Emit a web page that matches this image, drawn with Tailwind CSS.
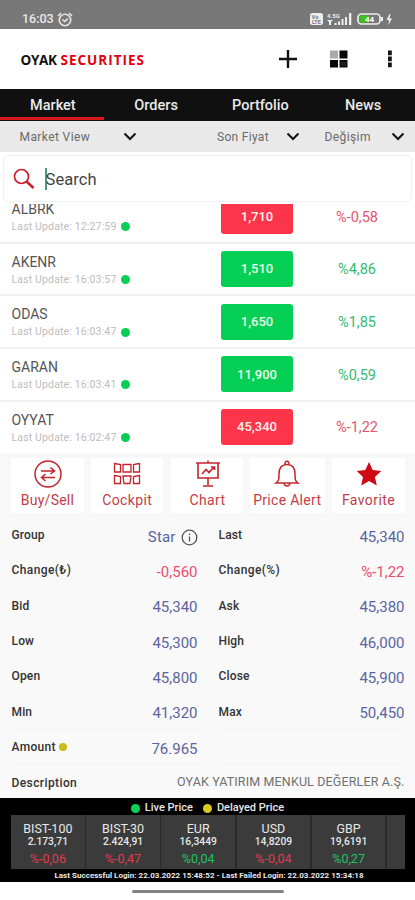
<!DOCTYPE html>
<html lang="en">
<head>
<meta charset="utf-8">
<title>OYAK Securities</title>
<script src="https://cdn.jsdelivr.net/npm/@tailwindcss/browser@4"></script>
</head>
<body class="w-[415px] h-[900px] overflow-hidden bg-white font-['Roboto','Liberation_Sans',sans-serif] flex flex-col whitespace-nowrap">

<!-- Status bar -->
<div class="h-[29px] shrink-0 bg-[#787878] flex items-center pl-[22px] pr-[23px] pt-[9px] text-[#e8e8e8]">
  <span class="text-[12.500px] leading-4 font-medium">16:03</span>
  <svg class="ml-[3px]" width="16" height="15" viewBox="0 0 16 15" fill="none" stroke="#e8e8e8" stroke-width="1.6"><circle cx="8" cy="8" r="5.7"/><path d="M5.5 7.5l2.3 2 3-2.8M1 4l3-2.8M15 4l-3-2.8"/></svg>
  <svg class="ml-auto" width="83" height="15" viewBox="0 0 83 15">
    <rect x="1" y="1" width="13" height="12" rx="2.500" fill="#eee"/>
    <text x="2.500" y="6.700" font-size="6" font-weight="700" fill="#787878">Vo</text><text x="3" y="12" font-size="5.500" font-weight="700" fill="#787878">LTE</text>
    <text x="18" y="5.600" font-size="6" font-weight="700" fill="#eee">4.5G</text>
    <path d="M18 8h6l-2 2v3h-2v-3zM25.500 13v-2h2v2zM29 13V9.500h2V13zM32.500 13V7h2v6zM36 13V5h2v8zM40 13V1h2.300v12z" fill="#eee"/>
    <rect x="49" y="2" width="22" height="10" rx="3.500" fill="#787878" stroke="#eee" stroke-width="1.700"/><path d="M72 5h2v4h-2z" fill="#eee"/>
    <rect x="51" y="3.500" width="9" height="7" rx="1.500" fill="#3cc21c"/><text x="56" y="10" font-size="8" font-weight="700" fill="#fff">44</text>
    <path d="M80.500 2l-3 6h2.500l-.5 5 3.500-6.500h-2.500l1-4.500z" fill="#eee"/>
  </svg>
</div>

<!-- App header -->
<header class="h-[60px] shrink-0 flex items-center pl-[20.500px] pr-[20px]">
  <h1 class="flex font-['Open_Sans','Noto_Sans',sans-serif] font-bold text-[13.500px] leading-4 pt-px"><span class="w-[40px] text-[#111] tracking-[-0.300px]">OYAK</span><span class="text-[#e3000f] tracking-[1px]">SECURITIES</span></h1>
  <div class="ml-auto flex items-center">
    <svg width="20" height="20" viewBox="0 0 20 20" stroke="#111" stroke-width="2.400"><path d="M1 10h18M10 1v18"/></svg>
    <svg class="ml-[31px]" width="20" height="20" viewBox="0 0 20 20"><rect x="1" y="1.500" width="8" height="8" fill="#aaa"/><path d="M10.500 1.500h8v8h-8zM1 11h8v7.500H1zM10.500 11h8v7.500h-8z" fill="#080808"/><path d="M11.500 14h6M11.500 16h6" stroke="#444" stroke-width=".7"/></svg>
    <svg class="ml-[36px]" width="10" height="20" viewBox="0 0 10 20" fill="#151515"><path d="M3 1.500h3.800v4.800H3zM3 7.500h3.800v4.800H3zM3 13.500h3.800v4.800H3z"/></svg>
  </div>
</header>

<!-- Tabs -->
<nav class="h-[32px] shrink-0 bg-[#101010] grid grid-cols-4 text-[#eaeaea] text-[14.500px] font-medium text-center leading-[34px]">
  <div class="border-b-[3px] border-[#d9161c] h-[31px] pl-[2px]">Market</div><div class="pl-px">Orders</div><div class="pl-[2px]">Portfolio</div><div>News</div>
</nav>

<!-- Column filters -->
<div class="h-[31px] shrink-0 bg-[#e9e9e9] flex items-center text-[#6a6a6a] text-[12px]">
  <span class="ml-[19.500px] w-[103px] tracking-[0.400px]">Market View</span>
  <svg width="14" height="9" viewBox="0 0 14 9" fill="none" stroke="#111" stroke-width="2"><path d="M1.500 1.500l5.500 5.500 5.500-5.500"/></svg>
  <span class="ml-[80.500px] w-[69px] tracking-[0.300px]">Son Fiyat</span>
  <svg width="14" height="9" viewBox="0 0 14 9" fill="none" stroke="#111" stroke-width="2"><path d="M1.500 1.500l5.500 5.500 5.500-5.500"/></svg>
  <span class="ml-[24.500px] w-[66px] tracking-[0.400px]">Değişim</span>
  <svg width="14" height="9" viewBox="0 0 14 9" fill="none" stroke="#111" stroke-width="2"><path d="M1.500 1.500l5.500 5.500 5.500-5.500"/></svg>
</div>

<!-- Search -->
<div class="h-[52px] shrink-0 px-[3px] pt-[3px] pb-[2px] bg-white relative z-10">
  <div class="h-full rounded-[5px] border border-[#f1f1f1] bg-white flex items-center pl-[9px]">
    <svg width="22" height="22" viewBox="0 0 22 22" fill="none" stroke="#c8202c"><circle cx="8.500" cy="8.500" r="7" stroke-width="1.700"/><path d="M13.500 13.500l7 6.500" stroke-width="2.500"/></svg>
    <span class="ml-[10px] w-[1.500px] h-[22px] bg-[#4a9a83]"></span>
    <span class="text-[16.500px] text-[#444] -ml-px pt-[3px] tracking-[0.100px]">Search</span>
  </div>
</div>

<!-- Quotes -->
<main class="h-[249px] shrink-0 overflow-hidden flex flex-col justify-end">
  <div class="h-[52.700px] shrink-0 border-b-2 border-[#f0f0f0] flex items-center">
    <div class="w-[221px] shrink-0 pl-[11.500px] pt-[3px]"><div class="text-[14px] leading-[18px] text-[#555]">ALBRK</div><div class="flex items-center text-[10.500px] leading-[18px] text-[#bdbdbd] tracking-[0.150px]"><span class="w-[109.500px]">Last Update: 12:27:59</span><i class="size-[9px] rounded-full bg-[#06cf55]"></i></div></div>
    <div class="w-[72px] shrink-0 h-[36px] rounded-[3px] bg-[#fd354a] text-[#fff3ee] text-[13px] font-medium flex items-center justify-center">1,710</div><div class="w-[128px] shrink-0 pt-[2px] text-center text-[14.500px] text-[#e2566c]">%-0,58</div>
  </div>
  <div class="h-[52.700px] shrink-0 border-b-2 border-[#f0f0f0] flex items-center">
    <div class="w-[221px] shrink-0 pl-[11.500px] pt-[3px]"><div class="text-[14px] leading-[18px] text-[#555]">AKENR</div><div class="flex items-center text-[10.500px] leading-[18px] text-[#bdbdbd] tracking-[0.150px]"><span class="w-[109.500px]">Last Update: 16:03:57</span><i class="size-[9px] rounded-full bg-[#06cf55]"></i></div></div>
    <div class="w-[72px] shrink-0 h-[36px] rounded-[3px] bg-[#06cf55] text-[#e9ffe9] text-[13px] font-medium flex items-center justify-center">1,510</div><div class="w-[128px] shrink-0 pt-[2px] text-center text-[14.500px] text-[#35ba70]">%4,86</div>
  </div>
  <div class="h-[52.700px] shrink-0 border-b-2 border-[#f0f0f0] flex items-center">
    <div class="w-[221px] shrink-0 pl-[11.500px] pt-[3px]"><div class="text-[14px] leading-[18px] text-[#555]">ODAS</div><div class="flex items-center text-[10.500px] leading-[18px] text-[#bdbdbd] tracking-[0.150px]"><span class="w-[109.500px]">Last Update: 16:03:47</span><i class="size-[9px] rounded-full bg-[#06cf55]"></i></div></div>
    <div class="w-[72px] shrink-0 h-[36px] rounded-[3px] bg-[#06cf55] text-[#e9ffe9] text-[13px] font-medium flex items-center justify-center">1,650</div><div class="w-[128px] shrink-0 pt-[2px] text-center text-[14.500px] text-[#35ba70]">%1,85</div>
  </div>
  <div class="h-[52.700px] shrink-0 border-b-2 border-[#f0f0f0] flex items-center">
    <div class="w-[221px] shrink-0 pl-[11.500px] pt-[3px]"><div class="text-[14px] leading-[18px] text-[#555]">GARAN</div><div class="flex items-center text-[10.500px] leading-[18px] text-[#bdbdbd] tracking-[0.150px]"><span class="w-[109.500px]">Last Update: 16:03:41</span><i class="size-[9px] rounded-full bg-[#06cf55]"></i></div></div>
    <div class="w-[72px] shrink-0 h-[36px] rounded-[3px] bg-[#06cf55] text-[#e9ffe9] text-[13px] font-medium flex items-center justify-center">11,900</div><div class="w-[128px] shrink-0 pt-[2px] text-center text-[14.500px] text-[#35ba70]">%0,59</div>
  </div>
  <div class="h-[52.700px] -mb-[1.500px] shrink-0 border-b-2 border-[#f5f5f5] flex items-center">
    <div class="w-[221px] shrink-0 pl-[11.500px] pt-[3px]"><div class="text-[14px] leading-[18px] text-[#555]">OYYAT</div><div class="flex items-center text-[10.500px] leading-[18px] text-[#bdbdbd] tracking-[0.150px]"><span class="w-[109.500px]">Last Update: 16:02:47</span><i class="size-[9px] rounded-full bg-[#06cf55]"></i></div></div>
    <div class="w-[72px] shrink-0 h-[36px] rounded-[3px] bg-[#fd354a] text-[#fff3ee] text-[13px] font-medium flex items-center justify-center">45,340</div><div class="w-[128px] shrink-0 pt-[2px] text-center text-[14.500px] text-[#e2566c]">%-1,22</div>
  </div>
</main>

<!-- Actions -->
<div class="h-[64px] shrink-0 bg-[#f8f8f8] pt-[5px] pb-[4px] pl-[11px] pr-[10px] flex justify-between text-center text-[14px] text-[#c43c46]">
  <div class="w-[73px] bg-white flex flex-col items-center">
    <svg class="mt-[1px]" width="30" height="30" viewBox="0 0 30 30" fill="none" stroke="#c3242e" stroke-width="1.500"><circle cx="15" cy="15" r="13"/><path d="M8 12h13M17.500 8.500l4 3.500-4 3M22 18.500H9M12.500 15l-4 3.500 4 3.500"/></svg>
    <span class="leading-[22px] tracking-[0.250px]">Buy/Sell</span>
  </div>
  <div class="w-[72px] bg-white flex flex-col items-center">
    <svg class="mt-[1px]" width="30" height="30" viewBox="0 0 30 30" fill="none" stroke="#c3242e" stroke-width="1.300"><path d="M2.500 4.500l6 1v7.500h-6zM11 5.500h8v7.500h-8zM27.500 4.500l-6 1v7.500h6zM2.500 16.500l6 1v7h-6zM11 17h8l-1 7.500h-6zM27.500 16.500l-6 1v7h6z"/></svg>
    <span class="leading-[22px] tracking-[0.350px]">Cockpit</span>
  </div>
  <div class="w-[72px] bg-white flex flex-col items-center pl-[2px]">
    <svg class="mt-[1px]" width="30" height="30" viewBox="0 0 30 30" fill="none" stroke="#c3242e" stroke-width="1.600"><path d="M3 4h24M5 4v15h20V4M15 4V1.500M15 19v7M10 27h10M9 15l4-4.500 3 3L21 8M18 8h3.500v3"/></svg>
    <span class="leading-[22px] tracking-[0.350px]">Chart</span>
  </div>
  <div class="w-[75px] bg-white flex flex-col items-center">
    <svg class="mt-[1px]" width="30" height="30" viewBox="0 0 30 30" fill="none" stroke="#c3242e" stroke-width="1.500"><path d="M4 24c3-2 3-4 3-9 0-6 3-9.500 8-9.500s8 3.500 8 9.500c0 5 0 7 3 9zM13 5.300c-.5-4.200 4.500-4.200 4 0M12 24c.5 4 5.500 4 6 0"/></svg>
    <span class="leading-[22px] tracking-[0.300px]">Price Alert</span>
  </div>
  <div class="w-[73px] bg-white flex flex-col items-center">
    <svg class="mt-[1px]" width="30" height="30" viewBox="0 0 30 30" fill="#cf0a14"><path d="M15 3l3.700 8 8.600.9-6.400 6 1.900 8.600L15 22l-7.800 4.500L9 17.900l-6.300-6 8.600-.9z"/></svg>
    <span class="leading-[22px] tracking-[0.400px]">Favorite</span>
  </div>
</div>

<!-- Instrument details -->
<section class="h-[281px] shrink-0 overflow-hidden bg-[#f9f9f9] pl-[11.500px] pr-[10px] pt-px grid grid-cols-[186px_186px] gap-x-[21px] auto-rows-[35.300px] text-[12px] tracking-[0.150px] font-medium text-[#333]">
  <div class="flex items-center justify-between border-b border-[#f5f5f5]"><span>Group</span><span class="flex items-center gap-[5px] pt-1 text-[15px] font-normal text-[#5b64a0]">Star <svg width="17" height="17" viewBox="0 0 17 17" fill="none" stroke="#555" stroke-width="1.300"><circle cx="8.500" cy="8.500" r="7.300"/><path d="M8.500 7.500v5M8.500 4.500v1.500"/></svg></span></div>
  <div class="flex items-center justify-between border-b border-[#f5f5f5]"><span>Last</span><span class="pt-1 text-[15px] font-normal text-[#5b64a0] tracking-normal">45,340</span></div>
  <div class="flex items-center justify-between border-b border-[#f5f5f5]"><span class="tracking-[0.400px]">Change(₺)</span><span class="pt-1 text-[15px] font-normal text-[#ef4e6c] tracking-normal">-0,560</span></div>
  <div class="flex items-center justify-between border-b border-[#f5f5f5]"><span class="tracking-[0.400px]">Change(%)</span><span class="pt-1 text-[15px] font-normal text-[#ef4e6c] tracking-normal">%-1,22</span></div>
  <div class="flex items-center justify-between border-b border-[#f5f5f5]"><span>Bid</span><span class="pt-1 text-[15px] font-normal text-[#5b64a0] tracking-normal">45,340</span></div>
  <div class="flex items-center justify-between border-b border-[#f5f5f5]"><span>Ask</span><span class="pt-1 text-[15px] font-normal text-[#5b64a0] tracking-normal">45,380</span></div>
  <div class="flex items-center justify-between border-b border-[#f5f5f5]"><span>Low</span><span class="pt-1 text-[15px] font-normal text-[#5b64a0] tracking-normal">45,300</span></div>
  <div class="flex items-center justify-between border-b border-[#f5f5f5]"><span>High</span><span class="pt-1 text-[15px] font-normal text-[#5b64a0] tracking-normal">46,000</span></div>
  <div class="flex items-center justify-between border-b border-[#f5f5f5]"><span>Open</span><span class="pt-1 text-[15px] font-normal text-[#5b64a0] tracking-normal">45,800</span></div>
  <div class="flex items-center justify-between border-b border-[#f5f5f5]"><span>Close</span><span class="pt-1 text-[15px] font-normal text-[#5b64a0] tracking-normal">45,900</span></div>
  <div class="flex items-center justify-between border-b border-[#f2f2f2]"><span>Min</span><span class="pt-1 text-[15px] font-normal text-[#5b64a0] tracking-normal">41,320</span></div>
  <div class="flex items-center justify-between border-b border-[#f2f2f2]"><span>Max</span><span class="pt-1 text-[15px] font-normal text-[#5b64a0] tracking-normal">50,450</span></div>
  <div class="flex items-center justify-between border-b border-[#f2f2f2]"><span class="flex items-center gap-[3px] tracking-[0.300px]">Amount <i class="size-[8.500px] rounded-full bg-[#ccb91c]"></i></span><span class="pt-1 text-[15px] font-normal text-[#5b64a0] tracking-normal">76.965</span></div>
  <div class="border-b border-[#f2f2f2]"></div>
  <div class="col-span-2 flex items-center justify-between"><span class="tracking-[0.400px]">Description</span><span class="text-[12.500px] font-normal text-[#707070] tracking-[0.140px]">OYAK YATIRIM MENKUL DEĞERLER A.Ş.</span></div>
</section>

<!-- Ticker -->
<footer class="h-[84px] shrink-0 bg-black text-[#e8e8e8]">
  <div class="h-[17px] pt-[4px] flex items-center justify-center text-[11px] font-medium">
    <i class="size-[9px] rounded-full bg-[#0bd35a] mr-[5px]"></i><span>Live Price</span><i class="size-[9px] rounded-full bg-[#d9ca20] ml-[10px] mr-[5px]"></i><span>Delayed Price</span>
  </div>
  <div class="h-[54px] ml-[11px] w-[394px] bg-[#2a2a2a] flex gap-[1.500px] text-center overflow-hidden">
    <div class="w-[73.700px] shrink-0 bg-[#3b3b3b] pt-[6px]"><div class="text-[12.500px] leading-[15px]">BIST-100</div><div class="text-[10.300px] leading-[12px] font-medium">2.173,71</div><div class="text-[12.500px] leading-[21px] text-[#e5394f]">%-0,06</div></div>
    <div class="w-[73.700px] shrink-0 bg-[#3b3b3b] pt-[6px]"><div class="text-[12.500px] leading-[15px]">BIST-30</div><div class="text-[10.300px] leading-[12px] font-medium">2.424,91</div><div class="text-[12.500px] leading-[21px] text-[#e5394f]">%-0,47</div></div>
    <div class="w-[73.700px] shrink-0 bg-[#3b3b3b] pt-[6px]"><div class="text-[12.500px] leading-[15px]">EUR</div><div class="text-[10.300px] leading-[12px] font-medium">16,3449</div><div class="text-[12.500px] leading-[21px] text-[#1fc360]">%0,04</div></div>
    <div class="w-[73.700px] shrink-0 bg-[#3b3b3b] pt-[6px]"><div class="text-[12.500px] leading-[15px]">USD</div><div class="text-[10.300px] leading-[12px] font-medium">14,8209</div><div class="text-[12.500px] leading-[21px] text-[#e5394f]">%-0,04</div></div>
    <div class="w-[73.700px] shrink-0 bg-[#3b3b3b] pt-[6px]"><div class="text-[12.500px] leading-[15px]">GBP</div><div class="text-[10.300px] leading-[12px] font-medium">19,6191</div><div class="text-[12.500px] leading-[21px] text-[#1fc360]">%0,27</div></div>
    <div class="grow bg-[#3b3b3b]"></div>
  </div>
  <div class="text-center text-[8px] leading-[13px] pl-[3px] font-bold tracking-[0.030px]">Last Successful Login: 22.03.2022 15:48:52 - Last Failed Login: 22.03.2022 15:34:18</div>
</footer>
<div class="h-[18px] shrink-0 bg-white flex justify-center pt-[8px]"><div class="w-[152px] h-[3px] rounded-full bg-[#828282]"></div></div>
</body>
</html>
